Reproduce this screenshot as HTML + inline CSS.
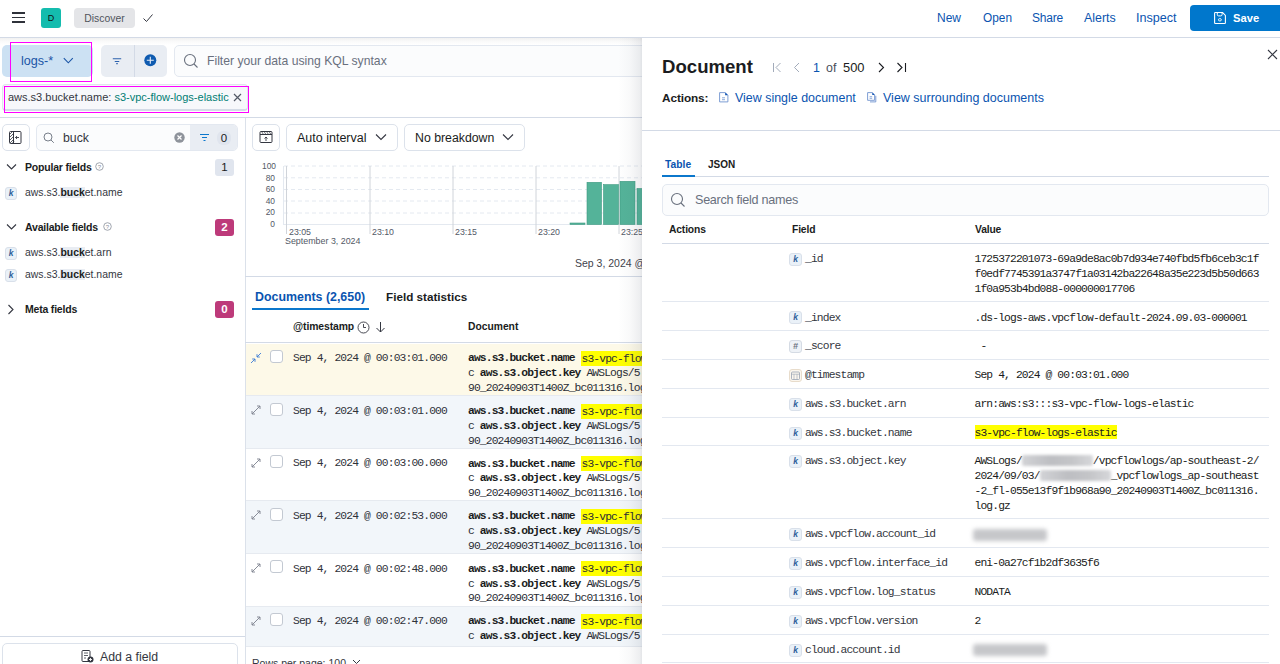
<!DOCTYPE html>
<html><head><meta charset="utf-8">
<style>
*{box-sizing:border-box;margin:0;padding:0}
html,body{width:1280px;height:664px;overflow:hidden;background:#fff;font-family:"Liberation Sans",sans-serif;color:#343741;font-size:12.4px}
.a{position:absolute;white-space:nowrap}
.mono{font-family:"Liberation Mono",monospace}
.link{color:#0a54b0}
svg{display:block}
</style></head><body>

<!-- HEADER -->
<div class="a" style="left:0;top:38px;width:1280px;height:7px;background:linear-gradient(to bottom,rgba(0,0,0,0.055),rgba(0,0,0,0.02) 50%,rgba(0,0,0,0))"></div>
<div class="a" style="left:0;top:0;width:1280px;height:38px;background:#fff;border-bottom:1px solid #d3dae6"></div>
<div class="a" style="left:11.5px;top:12.3px;width:13px;height:1.6px;background:#2f323a"></div>
<div class="a" style="left:11.5px;top:16.7px;width:13px;height:1.6px;background:#2f323a"></div>
<div class="a" style="left:11.5px;top:21.2px;width:13px;height:1.6px;background:#2f323a"></div>
<div class="a" style="left:41px;top:8px;width:20px;height:19.5px;background:#14bcae;border-radius:3px;font-size:9px;color:#111;text-align:center;line-height:20px">D</div>
<div class="a" style="left:74px;top:8px;width:61px;height:19.5px;background:#e4e5e8;border-radius:4px;font-size:10.4px;color:#50545c;text-align:center;line-height:21px">Discover</div>
<svg class="a" style="left:142px;top:12px" width="12" height="12" viewBox="0 0 12 12"><path d="M1.5 6.5 L4.5 9.5 L10.5 2.5" fill="none" stroke="#343741" stroke-width="1"/></svg>

<div class="a link" style="left:937px;top:11px;font-size:12px">New</div>
<div class="a link" style="left:983px;top:11px;font-size:11.85px">Open</div>
<div class="a link" style="left:1032px;top:11px;font-size:12px;letter-spacing:-0.2px">Share</div>
<div class="a link" style="left:1084px;top:11px;font-size:12.4px">Alerts</div>
<div class="a link" style="left:1136px;top:11px;font-size:12.6px">Inspect</div>
<div class="a" style="left:1190px;top:5px;width:95px;height:26px;background:#0077cc;border-radius:4px"></div>
<svg class="a" style="left:1213px;top:11px" width="14" height="14" viewBox="0 0 14 14"><path d="M1.6 2.2Q1.6 1.5 2.3 1.5H9.6L12.4 4.4V11.8Q12.4 12.5 11.7 12.5H2.3Q1.6 12.5 1.6 11.8Z" fill="none" stroke="#fff" stroke-width="1.1"/><path d="M4.3 1.6V3.6Q4.3 4.9 5.6 4.9H7.8Q9.1 4.9 9.1 3.6V1.6" fill="none" stroke="#fff" stroke-width="1"/><ellipse cx="6.9" cy="8.8" rx="1.5" ry="1.2" fill="none" stroke="#fff" stroke-width="0.9"/></svg>
<div class="a" style="left:1233px;top:11.5px;font-size:11.2px;font-weight:700;color:#fff">Save</div>

<!-- QUERY BAR -->
<div class="a" style="left:2px;top:45px;width:91px;height:32px;background:#cce1f3;border-radius:5px"></div>
<div class="a" style="left:21px;top:54px;font-size:12.6px;color:#1a55a6">logs-*</div>
<svg class="a" style="left:63px;top:57px" width="11" height="8" viewBox="0 0 11 8"><path d="M0.8 1.2 L5.3 5.8 L9.8 1.2" fill="none" stroke="#1a55a6" stroke-width="1.1"/></svg>
<div class="a" style="left:10px;top:41.7px;width:82.4px;height:40px;border:1.6px solid #ff00ff"></div>

<div class="a" style="left:101px;top:45px;width:66px;height:32px;background:#e9edf3;border-radius:5px"></div>
<div class="a" style="left:134px;top:45px;width:1px;height:32px;background:#d3dae6"></div>
<svg class="a" style="left:112px;top:57px" width="10" height="8" viewBox="0 0 10 8"><path d="M0.8 1.75h8.4M2.75 4.5h4.5M4.25 6.6h1.5" stroke="#2d62ad" stroke-width="1.1"/></svg>
<svg class="a" style="left:143px;top:53px" width="15" height="15" viewBox="0 0 15 15"><circle cx="7.3" cy="7.3" r="6" fill="#0f5bb0"/><path d="M7.3 3.8v7M3.8 7.3h7" stroke="#e8eef7" stroke-width="1.1"/></svg>

<div class="a" style="left:174px;top:45px;width:480px;height:32px;background:#fbfcfd;border:1px solid #e3e8f0;border-radius:5px"></div>
<svg class="a" style="left:183px;top:53px" width="16" height="16" viewBox="0 0 16 16"><circle cx="7" cy="7" r="5.5" fill="none" stroke="#69707d" stroke-width="1.1"/><path d="M11 11l3.5 3.5" stroke="#69707d" stroke-width="1.1"/></svg>
<div class="a" style="left:207px;top:54px;font-size:12.2px;color:#69707d">Filter your data using KQL syntax</div>

<!-- FILTER PILL -->
<div class="a" style="left:2px;top:84px;width:246px;height:27px;background:#f7f8fb;border:1px solid #dfe4ec;border-bottom:2px solid #d3dae6;border-radius:4px"></div>
<div class="a" style="left:8px;top:91px;font-size:11px;color:#343741">aws.s3.bucket.name: <span style="color:#017d73">s3-vpc-flow-logs-elastic</span></div>
<svg class="a" style="left:233px;top:93px" width="9" height="9" viewBox="0 0 9 9"><path d="M1 1l7 7M8 1l-7 7" stroke="#535966" stroke-width="1.2"/></svg>
<div class="a" style="left:4px;top:86px;width:245px;height:27px;border:1.7px solid #ff00ff"></div>

<div class="a" style="left:0;top:117px;width:642px;height:1px;background:#d3dae6"></div>

<!-- SIDEBAR -->
<div class="a" style="left:245px;top:118px;width:1px;height:546px;background:#dbe1ea"></div>
<div class="a" style="left:2px;top:124px;width:28px;height:27px;border:1px solid #dce2eb;border-radius:5px;background:#fff"></div>
<svg class="a" style="left:9px;top:131px" width="13" height="13" viewBox="0 0 13 13"><rect x="0.5" y="0.5" width="11.5" height="12" rx="1" fill="none" stroke="#343741" stroke-width="1"/><path d="M1 3l3-3M1 6l4-4M1 9l4-4M1 12l4-4M3 12.5l2-2" stroke="#343741" stroke-width="0.8"/><path d="M4.5 0.5v12" stroke="#343741" stroke-width="1"/><path d="M10 6.5H6.5M8 5l-1.5 1.5L8 8" fill="none" stroke="#343741" stroke-width="0.9"/></svg>
<div class="a" style="left:36px;top:124px;width:202px;height:27px;background:#fbfcfd;border:1px solid #e3e8f0;border-radius:5px"></div>
<svg class="a" style="left:43px;top:132px" width="12" height="12" viewBox="0 0 12 12"><circle cx="5" cy="5" r="4" fill="none" stroke="#69707d" stroke-width="0.9"/><path d="M8 8l2.8 2.8" stroke="#69707d" stroke-width="0.9"/></svg>
<div class="a" style="left:63px;top:131px;font-size:12.3px;color:#343741">buck</div>
<svg class="a" style="left:174px;top:132px" width="11" height="11" viewBox="0 0 11 11"><circle cx="5.5" cy="5.5" r="5.2" fill="#8e939b"/><path d="M3.5 3.5l4 4M7.5 3.5l-4 4" stroke="#fff" stroke-width="1.2"/></svg>
<div class="a" style="left:190px;top:125px;width:47px;height:25px;background:#e9edf3;border-radius:0 4px 4px 0"></div>
<svg class="a" style="left:199px;top:133px" width="11" height="9" viewBox="0 0 11 9"><path d="M1 1.5h9M3 4.5h5M4.5 7.5h2" stroke="#0b77cc" stroke-width="1"/></svg>
<div class="a" style="left:217px;top:131px;width:14px;height:14px;background:#e0e5ee;border-radius:6px;font-size:11.5px;text-align:center;line-height:14px;color:#1a1c21">0</div>

<svg class="a" style="left:6px;top:163px" width="11" height="8" viewBox="0 0 11 8"><path d="M1 1.5l4.5 4.5L10 1.5" fill="none" stroke="#343741" stroke-width="1.1"/></svg>
<div class="a" style="left:25px;top:161px;font-size:10.5px;font-weight:700;letter-spacing:-0.2px;color:#1a1c21">Popular fields</div>
<svg class="a" style="left:95px;top:161.5px" width="9" height="9" viewBox="0 0 9 9"><circle cx="4.5" cy="4.5" r="3.8" fill="none" stroke="#8a919c" stroke-width="0.8"/><text x="4.5" y="6.8" font-size="6" text-anchor="middle" fill="#8a919c" font-family="Liberation Sans">?</text></svg>
<div class="a" style="left:215px;top:159px;width:19px;height:17px;background:#e0e5ee;border-radius:3px;font-size:11.5px;text-align:center;line-height:17px;color:#1a1c21">1</div>

<div class="a" style="left:5px;top:187px;width:12px;height:13px;background:#eaf1f8;border:1px solid #d9e0ea;border-radius:3px;font-size:8.5px;font-style:italic;font-weight:700;color:#2e5f9a;text-align:center;line-height:11px">k</div>
<div class="a" style="left:25px;top:187px;font-size:10.45px;color:#343741">aws.s3.<b style="background:#e9edf3;color:#1a1c21">buck</b>et.name</div>

<svg class="a" style="left:6px;top:223px" width="11" height="8" viewBox="0 0 11 8"><path d="M1 1.5l4.5 4.5L10 1.5" fill="none" stroke="#343741" stroke-width="1.1"/></svg>
<div class="a" style="left:25px;top:221px;font-size:10.5px;font-weight:700;letter-spacing:-0.2px;color:#1a1c21">Available fields</div>
<svg class="a" style="left:103px;top:221.5px" width="9" height="9" viewBox="0 0 9 9"><circle cx="4.5" cy="4.5" r="3.8" fill="none" stroke="#8a919c" stroke-width="0.8"/><text x="4.5" y="6.8" font-size="6" text-anchor="middle" fill="#8a919c" font-family="Liberation Sans">?</text></svg>
<div class="a" style="left:215px;top:219px;width:19px;height:17px;background:#bd3a7a;border-radius:3px;font-size:11.5px;font-weight:700;text-align:center;line-height:17px;color:#fff">2</div>

<div class="a" style="left:5px;top:247px;width:12px;height:13px;background:#eaf1f8;border:1px solid #d9e0ea;border-radius:3px;font-size:8.5px;font-style:italic;font-weight:700;color:#2e5f9a;text-align:center;line-height:11px">k</div>
<div class="a" style="left:25px;top:247px;font-size:10.45px;color:#343741">aws.s3.<b style="background:#e9edf3;color:#1a1c21">buck</b>et.arn</div>
<div class="a" style="left:5px;top:269px;width:12px;height:13px;background:#eaf1f8;border:1px solid #d9e0ea;border-radius:3px;font-size:8.5px;font-style:italic;font-weight:700;color:#2e5f9a;text-align:center;line-height:11px">k</div>
<div class="a" style="left:25px;top:269px;font-size:10.45px;color:#343741">aws.s3.<b style="background:#e9edf3;color:#1a1c21">buck</b>et.name</div>

<svg class="a" style="left:7px;top:304px" width="8" height="11" viewBox="0 0 8 11"><path d="M1.5 1l4.5 4.5L1.5 10" fill="none" stroke="#343741" stroke-width="1.1"/></svg>
<div class="a" style="left:25px;top:303px;font-size:10.5px;font-weight:700;letter-spacing:-0.2px;color:#1a1c21">Meta fields</div>
<div class="a" style="left:215px;top:301px;width:19px;height:17px;background:#bd3a7a;border-radius:3px;font-size:11.5px;font-weight:700;text-align:center;line-height:17px;color:#fff">0</div>

<div class="a" style="left:0;top:636px;width:245px;height:1px;background:#d3dae6"></div>
<div class="a" style="left:2px;top:643px;width:236px;height:30px;border:1px solid #dce2eb;border-radius:5px;background:#fff"></div>
<svg class="a" style="left:81px;top:650px" width="13" height="13" viewBox="0 0 13 13"><rect x="1" y="0.5" width="8" height="11" rx="1" fill="none" stroke="#343741" stroke-width="1"/><path d="M3 3h4M3 5.5h4M3 8h2" stroke="#343741" stroke-width="0.8"/><circle cx="9.5" cy="9.5" r="3" fill="#343741"/><path d="M9.5 8v3M8 9.5h3" stroke="#fff" stroke-width="0.9"/></svg>
<div class="a" style="left:100px;top:650px;font-size:12.3px;color:#343741">Add a field</div>

<!-- MAIN -->
<div class="a" style="left:252px;top:124px;width:28px;height:27px;border:1px solid #dce2eb;border-radius:5px;background:#fff"></div>
<svg class="a" style="left:259px;top:130px" width="14" height="14" viewBox="0 0 14 14"><rect x="1" y="1.5" width="12" height="11" rx="1" fill="none" stroke="#343741" stroke-width="1"/><path d="M1 4.5h12" stroke="#343741" stroke-width="1"/><path d="M2.5 1.5l2 3M5 1.5l2 3M7.5 1.5l2 3M10 1.5l2 3" stroke="#343741" stroke-width="0.7"/><path d="M7 11V7M5.5 8.5L7 7l1.5 1.5" fill="none" stroke="#343741" stroke-width="0.9"/></svg>
<div class="a" style="left:286px;top:124px;width:112px;height:27px;border:1px solid #dce2eb;border-radius:5px;background:#fff"></div>
<div class="a" style="left:297px;top:131px;font-size:12.5px;color:#1a1c21">Auto interval</div>
<svg class="a" style="left:375px;top:133px" width="12" height="8" viewBox="0 0 12 8"><path d="M1 1.5L6 6.5L11 1.5" fill="none" stroke="#343741" stroke-width="1.1"/></svg>
<div class="a" style="left:404px;top:124px;width:121px;height:27px;border:1px solid #dce2eb;border-radius:5px;background:#fff"></div>
<div class="a" style="left:415px;top:131px;font-size:12.3px;color:#1a1c21">No breakdown</div>
<svg class="a" style="left:502px;top:133px" width="12" height="8" viewBox="0 0 12 8"><path d="M1 1.5L6 6.5L11 1.5" fill="none" stroke="#343741" stroke-width="1.1"/></svg>

<!-- chart -->
<div class="a" style="left:262px;top:161px;width:13px;text-align:right;font-size:8.4px;color:#535966;line-height:10px;white-space:normal">
<div style="height:11.6px">100</div><div style="height:11.6px">80</div><div style="height:11.6px">60</div><div style="height:11.6px">40</div><div style="height:11.6px">20</div><div style="height:11.6px">0</div></div>
<svg class="a" style="left:283px;top:160px" width="360" height="90" viewBox="0 0 360 90">
<g stroke="#e4e9f0" stroke-width="1" stroke-dasharray="4 3">
<line x1="1" y1="6" x2="360" y2="6"/><line x1="1" y1="17.8" x2="360" y2="17.8"/><line x1="1" y1="29.5" x2="360" y2="29.5"/><line x1="1" y1="41" x2="360" y2="41"/><line x1="1" y1="53" x2="360" y2="53"/>
</g>
<line x1="0.5" y1="6" x2="0.5" y2="64.5" stroke="#e4e9f0"/>
<line x1="0" y1="64.5" x2="360" y2="64.5" stroke="#e4e9f0"/>
<g stroke="#d0d4da" stroke-width="1"><line x1="3.5" y1="6" x2="3.5" y2="74"/><line x1="87" y1="6" x2="87" y2="74"/><line x1="170" y1="6" x2="170" y2="74"/><line x1="253" y1="6" x2="253" y2="74"/><line x1="336" y1="6" x2="336" y2="74"/></g>
<g fill="#54b399" stroke="#3f9a80" stroke-width="0.6">
<rect x="287" y="63" width="15" height="1.5"/>
<rect x="304" y="22.3" width="14.5" height="42.2"/>
<rect x="320.5" y="24.6" width="15" height="39.9"/>
<rect x="337" y="21.3" width="15" height="43.2"/>
<rect x="354" y="28.5" width="15" height="36"/>
</g>
<g font-family="Liberation Sans" font-size="8.8" fill="#535966">
<text x="6" y="75">23:05</text><text x="89" y="75">23:10</text><text x="172" y="75">23:15</text><text x="255" y="75">23:20</text><text x="338" y="75">23:25</text>
<text x="2" y="84" font-size="8.9">September 3, 2024</text>
</g>
</svg>
<div class="a" style="left:575px;top:256.5px;font-size:10.5px;color:#3f434c">Sep 3, 2024 @ 00:03:01.000</div>
<div class="a" style="left:245px;top:276px;width:397px;height:1px;background:#d3dae6"></div>

<!-- tabs -->
<div class="a" style="left:255px;top:290px;font-size:12.4px;font-weight:700;color:#0a54b0">Documents (2,650)</div>
<div class="a" style="left:252px;top:308px;width:117px;height:2px;background:#0b77cc"></div>
<div class="a" style="left:386px;top:290px;font-size:11.7px;font-weight:700;color:#1a1c21">Field statistics</div>

<!-- table header -->
<div class="a" style="left:293px;top:321px;font-size:10.4px;font-weight:700;letter-spacing:-0.1px;color:#1a1c21">@timestamp</div>
<svg class="a" style="left:357px;top:321px" width="13" height="13" viewBox="0 0 13 13"><circle cx="6.5" cy="6.5" r="5.5" fill="none" stroke="#343741" stroke-width="0.9"/><path d="M6.5 3v3.5h2.5" fill="none" stroke="#343741" stroke-width="0.9"/></svg>
<svg class="a" style="left:375px;top:321px" width="11" height="12" viewBox="0 0 11 12"><path d="M5.5 1v10M1.5 7l4 4 4-4" fill="none" stroke="#343741" stroke-width="1"/></svg>
<div class="a" style="left:468px;top:321px;font-size:10.3px;font-weight:700;color:#1a1c21">Document</div>
<div class="a" style="left:245px;top:342px;width:397px;height:1px;background:#d3dae6"></div>

<!--ROWS-->
<div class="a" style="left:246px;top:343.6px;width:396px;height:52.6px;background:#fdf9e8;border-bottom:1px solid #e6eaf0"></div>
<svg class="a" style="left:250px;top:351.6px" width="12" height="12" viewBox="0 0 12 12"><path d="M11 1L7 5M7 2.2V5h2.8M1 11l4-4M5 9.8V7H2.2" fill="none" stroke="#3a7bd5" stroke-width="0.9"/></svg>
<div class="a" style="left:270px;top:349.9px;width:13px;height:13px;border:1px solid #c3c9d2;border-radius:3px;background:#fff"></div>
<div class="a mono" style="left:293px;top:351.1px;font-size:11.3px;letter-spacing:-0.86px;line-height:14.75px;color:#2f323a">Sep 4, 2024 @ 00:03:01.000</div>
<div class="a mono" style="left:468px;top:351.4px;font-size:11.3px;letter-spacing:-0.86px;line-height:14.75px;color:#2a2d35;white-space:pre"><b style="color:#1a1c21">aws.s3.bucket.name</b> <span style="background:#ffff00;padding:1.5px 0;margin-left:1px">s3-vpc-flow-logs-elastic</span>
c <b style="color:#1a1c21">aws.s3.object.key</b> AWSLogs/5
90_20240903T1400Z_bc011316.log.gz</div>
<div class="a" style="left:246px;top:396.2px;width:396px;height:52.6px;background:#f2f6fa;border-bottom:1px solid #e6eaf0"></div>
<svg class="a" style="left:250px;top:404.2px" width="12" height="12" viewBox="0 0 12 12"><path d="M2 10L10 2M7 2h3v3M2 7v3h3" fill="none" stroke="#7a808c" stroke-width="0.9"/></svg>
<div class="a" style="left:270px;top:402.5px;width:13px;height:13px;border:1px solid #c3c9d2;border-radius:3px;background:#fff"></div>
<div class="a mono" style="left:293px;top:403.7px;font-size:11.3px;letter-spacing:-0.86px;line-height:14.75px;color:#2f323a">Sep 4, 2024 @ 00:03:01.000</div>
<div class="a mono" style="left:468px;top:404.0px;font-size:11.3px;letter-spacing:-0.86px;line-height:14.75px;color:#2a2d35;white-space:pre"><b style="color:#1a1c21">aws.s3.bucket.name</b> <span style="background:#ffff00;padding:1.5px 0;margin-left:1px">s3-vpc-flow-logs-elastic</span>
c <b style="color:#1a1c21">aws.s3.object.key</b> AWSLogs/5
90_20240903T1400Z_bc011316.log.gz</div>
<div class="a" style="left:246px;top:448.8px;width:396px;height:52.6px;background:#fff;border-bottom:1px solid #e6eaf0"></div>
<svg class="a" style="left:250px;top:456.8px" width="12" height="12" viewBox="0 0 12 12"><path d="M2 10L10 2M7 2h3v3M2 7v3h3" fill="none" stroke="#7a808c" stroke-width="0.9"/></svg>
<div class="a" style="left:270px;top:455.1px;width:13px;height:13px;border:1px solid #c3c9d2;border-radius:3px;background:#fff"></div>
<div class="a mono" style="left:293px;top:456.3px;font-size:11.3px;letter-spacing:-0.86px;line-height:14.75px;color:#2f323a">Sep 4, 2024 @ 00:03:00.000</div>
<div class="a mono" style="left:468px;top:456.6px;font-size:11.3px;letter-spacing:-0.86px;line-height:14.75px;color:#2a2d35;white-space:pre"><b style="color:#1a1c21">aws.s3.bucket.name</b> <span style="background:#ffff00;padding:1.5px 0;margin-left:1px">s3-vpc-flow-logs-elastic</span>
c <b style="color:#1a1c21">aws.s3.object.key</b> AWSLogs/5
90_20240903T1400Z_bc011316.log.gz</div>
<div class="a" style="left:246px;top:501.4px;width:396px;height:52.6px;background:#f2f6fa;border-bottom:1px solid #e6eaf0"></div>
<svg class="a" style="left:250px;top:509.4px" width="12" height="12" viewBox="0 0 12 12"><path d="M2 10L10 2M7 2h3v3M2 7v3h3" fill="none" stroke="#7a808c" stroke-width="0.9"/></svg>
<div class="a" style="left:270px;top:507.7px;width:13px;height:13px;border:1px solid #c3c9d2;border-radius:3px;background:#fff"></div>
<div class="a mono" style="left:293px;top:508.9px;font-size:11.3px;letter-spacing:-0.86px;line-height:14.75px;color:#2f323a">Sep 4, 2024 @ 00:02:53.000</div>
<div class="a mono" style="left:468px;top:509.2px;font-size:11.3px;letter-spacing:-0.86px;line-height:14.75px;color:#2a2d35;white-space:pre"><b style="color:#1a1c21">aws.s3.bucket.name</b> <span style="background:#ffff00;padding:1.5px 0;margin-left:1px">s3-vpc-flow-logs-elastic</span>
c <b style="color:#1a1c21">aws.s3.object.key</b> AWSLogs/5
90_20240903T1400Z_bc011316.log.gz</div>
<div class="a" style="left:246px;top:554.0px;width:396px;height:52.6px;background:#fff;border-bottom:1px solid #e6eaf0"></div>
<svg class="a" style="left:250px;top:562.0px" width="12" height="12" viewBox="0 0 12 12"><path d="M2 10L10 2M7 2h3v3M2 7v3h3" fill="none" stroke="#7a808c" stroke-width="0.9"/></svg>
<div class="a" style="left:270px;top:560.3px;width:13px;height:13px;border:1px solid #c3c9d2;border-radius:3px;background:#fff"></div>
<div class="a mono" style="left:293px;top:561.5px;font-size:11.3px;letter-spacing:-0.86px;line-height:14.75px;color:#2f323a">Sep 4, 2024 @ 00:02:48.000</div>
<div class="a mono" style="left:468px;top:561.8px;font-size:11.3px;letter-spacing:-0.86px;line-height:14.75px;color:#2a2d35;white-space:pre"><b style="color:#1a1c21">aws.s3.bucket.name</b> <span style="background:#ffff00;padding:1.5px 0;margin-left:1px">s3-vpc-flow-logs-elastic</span>
c <b style="color:#1a1c21">aws.s3.object.key</b> AWSLogs/5
90_20240903T1400Z_bc011316.log.gz</div>
<div class="a" style="left:246px;top:606.6px;width:396px;height:40.2px;background:#f2f6fa;border-bottom:1px solid #e6eaf0"></div>
<svg class="a" style="left:250px;top:614.6px" width="12" height="12" viewBox="0 0 12 12"><path d="M2 10L10 2M7 2h3v3M2 7v3h3" fill="none" stroke="#7a808c" stroke-width="0.9"/></svg>
<div class="a" style="left:270px;top:612.9px;width:13px;height:13px;border:1px solid #c3c9d2;border-radius:3px;background:#fff"></div>
<div class="a mono" style="left:293px;top:614.1px;font-size:11.3px;letter-spacing:-0.86px;line-height:14.75px;color:#2f323a">Sep 4, 2024 @ 00:02:47.000</div>
<div class="a mono" style="left:468px;top:614.4px;font-size:11.3px;letter-spacing:-0.86px;line-height:14.75px;color:#2a2d35;white-space:pre"><b style="color:#1a1c21">aws.s3.bucket.name</b> <span style="background:#ffff00;padding:1.5px 0;margin-left:1px">s3-vpc-flow-logs-elastic</span>
c <b style="color:#1a1c21">aws.s3.object.key</b> AWSLogs/5</div>
<!--/ROWS-->
<div class="a" style="left:252px;top:657px;font-size:10.5px;color:#343741">Rows per page: 100</div>
<svg class="a" style="left:352px;top:659px" width="9" height="6" viewBox="0 0 9 6"><path d="M1 1l3.5 3.5L8 1" fill="none" stroke="#343741" stroke-width="1"/></svg>

<!-- FLYOUT -->
<div class="a" style="left:642px;top:38px;width:638px;height:626px;background:#fff;"></div>
<div class="a" style="left:618px;top:38px;width:24px;height:626px;background:linear-gradient(to right,rgba(60,70,90,0),rgba(60,70,90,0.03) 50%,rgba(60,70,90,0.09) 90%,rgba(60,70,90,0.14))"></div>
<svg class="a" style="left:1267px;top:49px" width="11" height="11" viewBox="0 0 11 11"><path d="M1 1l9 9M10 1l-9 9" stroke="#343741" stroke-width="1.1"/></svg>
<div class="a" style="left:662px;top:56px;font-size:18.6px;font-weight:700;color:#1a1c21">Document</div>
<svg class="a" style="left:772px;top:62px" width="11" height="11" viewBox="0 0 11 11"><path d="M1.5 1v9M8.5 1l-4.5 4.5 4.5 4.5" fill="none" stroke="#a2abba" stroke-width="1"/></svg>
<svg class="a" style="left:792px;top:62px" width="9" height="11" viewBox="0 0 9 11"><path d="M7 1L2.5 5.5 7 10" fill="none" stroke="#a2abba" stroke-width="1"/></svg>
<div class="a" style="left:813px;top:60.5px;font-size:12.4px;color:#0a54b0">1</div>
<div class="a" style="left:826px;top:60.5px;font-size:12.4px;color:#4a4f5a">of</div>
<div class="a" style="left:843px;top:60px;font-size:12.9px;color:#1a1c21">500</div>
<svg class="a" style="left:877px;top:62px" width="9" height="11" viewBox="0 0 9 11"><path d="M2 1l4.5 4.5L2 10" fill="none" stroke="#1a1c21" stroke-width="1.1"/></svg>
<svg class="a" style="left:896px;top:62px" width="11" height="11" viewBox="0 0 11 11"><path d="M1.5 1l4.5 4.5-4.5 4.5M9.5 1v9" fill="none" stroke="#1a1c21" stroke-width="1.1"/></svg>
<div class="a" style="left:662px;top:90.5px;font-size:11.8px;letter-spacing:-0.1px;font-weight:700;color:#1a1c21">Actions:</div>
<svg class="a" style="left:719px;top:92px" width="10" height="11" viewBox="0 0 10 11"><path d="M0.6 0.6H6.3L8.9 3.2V9.9H0.6Z" fill="none" stroke="#6f93cf" stroke-width="0.9"/><path d="M6.2 0.6L8.9 3.3H6.2Z" fill="#0a4fb0"/><path d="M3 5.8h3M3 7.7h3" stroke="#6f93cf" stroke-width="0.8"/></svg>
<div class="a" style="left:735px;top:91px;font-size:12.45px;color:#0a54b0">View single document</div>
<svg class="a" style="left:867px;top:92px" width="10" height="11" viewBox="0 0 10 11"><path d="M0.6 0.6H5.4L7.6 2.8V8.3H0.6Z" fill="none" stroke="#6f93cf" stroke-width="0.9"/><path d="M5.3 0.6L7.6 2.9H5.3Z" fill="#0a4fb0"/><path d="M2.6 4.7h2.6M2.6 6.3h2.6" stroke="#6f93cf" stroke-width="0.8"/><path d="M8.8 3.8V9.9H3" fill="none" stroke="#6f93cf" stroke-width="0.9"/></svg>
<div class="a" style="left:883px;top:91px;font-size:12.5px;color:#0a54b0">View surrounding documents</div>
<div class="a" style="left:642px;top:130px;width:638px;height:1px;background:#d3dae6"></div>
<div class="a" style="left:665px;top:159px;font-size:10.3px;font-weight:700;color:#0a54b0">Table</div>
<div class="a" style="left:708px;top:159px;font-size:10px;font-weight:700;color:#1a1c21">JSON</div>
<div class="a" style="left:662px;top:176px;width:607px;height:1px;background:#d3dae6"></div>
<div class="a" style="left:662px;top:175px;width:33px;height:2px;background:#0b77cc"></div>
<div class="a" style="left:662px;top:184px;width:607px;height:32px;background:#fbfcfd;border:1px solid #e3e8f0;border-radius:5px"></div>
<svg class="a" style="left:670px;top:192px" width="16" height="16" viewBox="0 0 16 16"><circle cx="7" cy="7" r="5.5" fill="none" stroke="#69707d" stroke-width="1.1"/><path d="M11 11l3.5 3.5" stroke="#69707d" stroke-width="1.1"/></svg>
<div class="a" style="left:695px;top:193px;font-size:12.6px;letter-spacing:-0.27px;color:#69707d">Search field names</div>
<div class="a" style="left:669px;top:224px;font-size:10.3px;font-weight:700;letter-spacing:-0.15px;color:#1a1c21">Actions</div>
<div class="a" style="left:792px;top:224px;font-size:10.3px;font-weight:700;letter-spacing:-0.15px;color:#1a1c21">Field</div>
<div class="a" style="left:975px;top:224px;font-size:10.3px;font-weight:700;letter-spacing:-0.15px;color:#1a1c21">Value</div>
<div class="a" style="left:662px;top:243px;width:607px;height:1px;background:#d3dae6"></div>
<div class="a" style="left:662px;top:301.2px;width:607px;height:1px;background:#e3e8f0"></div>
<div class="a" style="left:789px;top:253.2px;width:13px;height:13px;background:#eaf1f8;border:1px solid #d9e0ea;border-radius:3px;font-size:8.5px;font-style:italic;font-weight:700;color:#2e5f9a;text-align:center;line-height:11px">k</div>
<div class="a mono" style="left:805px;top:252.3px;font-size:11.3px;letter-spacing:-0.86px;line-height:14.9px;color:#343741">_id</div>
<div class="a mono" style="left:974.5px;top:252.3px;font-size:11.3px;letter-spacing:-0.86px;line-height:14.9px;color:#1a1c21;white-space:pre">1725372201073-69a9de8ac0b7d934e740fbd5fb6ceb3c1f<br>f0edf7745391a3747f1a03142ba22648a35e223d5b50d663<br>1f0a953b4bd088-000000017706</div>
<div class="a" style="left:662px;top:330.0px;width:607px;height:1px;background:#e3e8f0"></div>
<div class="a" style="left:789px;top:311.4px;width:13px;height:13px;background:#eaf1f8;border:1px solid #d9e0ea;border-radius:3px;font-size:8.5px;font-style:italic;font-weight:700;color:#2e5f9a;text-align:center;line-height:11px">k</div>
<div class="a mono" style="left:805px;top:310.5px;font-size:11.3px;letter-spacing:-0.86px;line-height:14.9px;color:#343741">_index</div>
<div class="a mono" style="left:974.5px;top:310.5px;font-size:11.3px;letter-spacing:-0.86px;line-height:14.9px;color:#1a1c21;white-space:pre">.ds-logs-aws.vpcflow-default-2024.09.03-000001</div>
<div class="a" style="left:662px;top:359.0px;width:607px;height:1px;background:#e3e8f0"></div>
<div class="a" style="left:789px;top:340.2px;width:13px;height:13px;background:#eef2f7;border:1px solid #d5dbe4;border-radius:3px;font-size:9px;font-style:italic;font-weight:700;color:#69707d;text-align:center;line-height:11px">#</div>
<div class="a mono" style="left:805px;top:339.3px;font-size:11.3px;letter-spacing:-0.86px;line-height:14.9px;color:#343741">_score</div>
<div class="a mono" style="left:974.5px;top:339.3px;font-size:11.3px;letter-spacing:-0.86px;line-height:14.9px;color:#1a1c21;white-space:pre"> -</div>
<div class="a" style="left:662px;top:387.9px;width:607px;height:1px;background:#e3e8f0"></div>
<div class="a" style="left:789px;top:369.2px;width:13px;height:13px;background:#fbf6ee;border:1px solid #e8dccb;border-radius:3px"></div>
<svg class="a" style="left:791px;top:371.2px" width="9" height="9" viewBox="0 0 9 9"><rect x="0.5" y="1" width="8" height="7.5" rx="1" fill="none" stroke="#98a2b3" stroke-width="0.8"/><path d="M0.5 3.2h8M3 3.2v5M6 3.2v5" stroke="#98a2b3" stroke-width="0.6"/></svg>
<div class="a mono" style="left:805px;top:368.3px;font-size:11.3px;letter-spacing:-0.86px;line-height:14.9px;color:#343741">@timestamp</div>
<div class="a mono" style="left:974.5px;top:368.3px;font-size:11.3px;letter-spacing:-0.86px;line-height:14.9px;color:#1a1c21;white-space:pre">Sep 4, 2024 @ 00:03:01.000</div>
<div class="a" style="left:662px;top:416.8px;width:607px;height:1px;background:#e3e8f0"></div>
<div class="a" style="left:789px;top:398.1px;width:13px;height:13px;background:#eaf1f8;border:1px solid #d9e0ea;border-radius:3px;font-size:8.5px;font-style:italic;font-weight:700;color:#2e5f9a;text-align:center;line-height:11px">k</div>
<div class="a mono" style="left:805px;top:397.2px;font-size:11.3px;letter-spacing:-0.86px;line-height:14.9px;color:#343741">aws.s3.bucket.arn</div>
<div class="a mono" style="left:974.5px;top:397.2px;font-size:11.3px;letter-spacing:-0.86px;line-height:14.9px;color:#1a1c21;white-space:pre">arn:aws:s3:::s3-vpc-flow-logs-elastic</div>
<div class="a" style="left:662px;top:445.1px;width:607px;height:1px;background:#e3e8f0"></div>
<div class="a" style="left:789px;top:427.1px;width:13px;height:13px;background:#eaf1f8;border:1px solid #d9e0ea;border-radius:3px;font-size:8.5px;font-style:italic;font-weight:700;color:#2e5f9a;text-align:center;line-height:11px">k</div>
<div class="a mono" style="left:805px;top:426.1px;font-size:11.3px;letter-spacing:-0.86px;line-height:14.9px;color:#343741">aws.s3.bucket.name</div>
<div class="a mono" style="left:974.5px;top:426.1px;font-size:11.3px;letter-spacing:-0.86px;line-height:14.9px;color:#1a1c21;white-space:pre"><span style="background:#ffff00;padding:2px 0 0 0">s3-vpc-flow-logs-elastic</span></div>
<div class="a" style="left:662px;top:517.7px;width:607px;height:1px;background:#e3e8f0"></div>
<div class="a" style="left:789px;top:455.4px;width:13px;height:13px;background:#eaf1f8;border:1px solid #d9e0ea;border-radius:3px;font-size:8.5px;font-style:italic;font-weight:700;color:#2e5f9a;text-align:center;line-height:11px">k</div>
<div class="a mono" style="left:805px;top:454.4px;font-size:11.3px;letter-spacing:-0.86px;line-height:14.9px;color:#343741">aws.s3.object.key</div>
<div class="a mono" style="left:974.5px;top:454.4px;font-size:11.3px;letter-spacing:-0.86px;line-height:14.9px;color:#1a1c21;white-space:pre">AWSLogs/<span style="display:inline-block;width:71px;height:11px;vertical-align:-2px;background:linear-gradient(90deg,#d2d3d6,#bdbec2 40%,#c4c5c8 70%,#d6d7da);filter:blur(1.4px);border-radius:2px"></span>/vpcflowlogs/ap-southeast-2/<br>2024/09/03/<span style="display:inline-block;width:71px;height:11px;vertical-align:-2px;background:linear-gradient(90deg,#d2d3d6,#bdbec2 40%,#c4c5c8 70%,#d6d7da);filter:blur(1.4px);border-radius:2px"></span>_vpcflowlogs_ap-southeast<br>-2_fl-055e13f9f1b968a90_20240903T1400Z_bc011316.<br>log.gz</div>
<div class="a" style="left:662px;top:546.5px;width:607px;height:1px;background:#e3e8f0"></div>
<div class="a" style="left:789px;top:528.0px;width:13px;height:13px;background:#eaf1f8;border:1px solid #d9e0ea;border-radius:3px;font-size:8.5px;font-style:italic;font-weight:700;color:#2e5f9a;text-align:center;line-height:11px">k</div>
<div class="a mono" style="left:805px;top:527.0px;font-size:11.3px;letter-spacing:-0.86px;line-height:14.9px;color:#343741">aws.vpcflow.account_id</div>
<div class="a" style="left:973px;top:528.5px;width:74px;height:12px;background:#c6c7ca;filter:blur(2.2px);border-radius:3px"></div>
<div class="a" style="left:662px;top:575.5px;width:607px;height:1px;background:#e3e8f0"></div>
<div class="a" style="left:789px;top:556.8px;width:13px;height:13px;background:#eaf1f8;border:1px solid #d9e0ea;border-radius:3px;font-size:8.5px;font-style:italic;font-weight:700;color:#2e5f9a;text-align:center;line-height:11px">k</div>
<div class="a mono" style="left:805px;top:555.8px;font-size:11.3px;letter-spacing:-0.86px;line-height:14.9px;color:#343741">aws.vpcflow.interface_id</div>
<div class="a mono" style="left:974.5px;top:555.8px;font-size:11.3px;letter-spacing:-0.86px;line-height:14.9px;color:#1a1c21;white-space:pre">eni-0a27cf1b2df3635f6</div>
<div class="a" style="left:662px;top:604.7px;width:607px;height:1px;background:#e3e8f0"></div>
<div class="a" style="left:789px;top:585.8px;width:13px;height:13px;background:#eaf1f8;border:1px solid #d9e0ea;border-radius:3px;font-size:8.5px;font-style:italic;font-weight:700;color:#2e5f9a;text-align:center;line-height:11px">k</div>
<div class="a mono" style="left:805px;top:584.8px;font-size:11.3px;letter-spacing:-0.86px;line-height:14.9px;color:#343741">aws.vpcflow.log_status</div>
<div class="a mono" style="left:974.5px;top:584.8px;font-size:11.3px;letter-spacing:-0.86px;line-height:14.9px;color:#1a1c21;white-space:pre">NODATA</div>
<div class="a" style="left:662px;top:633.5px;width:607px;height:1px;background:#e3e8f0"></div>
<div class="a" style="left:789px;top:615.0px;width:13px;height:13px;background:#eaf1f8;border:1px solid #d9e0ea;border-radius:3px;font-size:8.5px;font-style:italic;font-weight:700;color:#2e5f9a;text-align:center;line-height:11px">k</div>
<div class="a mono" style="left:805px;top:614.0px;font-size:11.3px;letter-spacing:-0.86px;line-height:14.9px;color:#343741">aws.vpcflow.version</div>
<div class="a mono" style="left:974.5px;top:614.0px;font-size:11.3px;letter-spacing:-0.86px;line-height:14.9px;color:#1a1c21;white-space:pre">2</div>
<div class="a" style="left:662px;top:662.0px;width:607px;height:1px;background:#e3e8f0"></div>
<div class="a" style="left:789px;top:643.8px;width:13px;height:13px;background:#eaf1f8;border:1px solid #d9e0ea;border-radius:3px;font-size:8.5px;font-style:italic;font-weight:700;color:#2e5f9a;text-align:center;line-height:11px">k</div>
<div class="a mono" style="left:805px;top:642.8px;font-size:11.3px;letter-spacing:-0.86px;line-height:14.9px;color:#343741">cloud.account.id</div>
<div class="a" style="left:973px;top:644.2px;width:74px;height:12px;background:#c6c7ca;filter:blur(2.2px);border-radius:3px"></div>
</body></html>
